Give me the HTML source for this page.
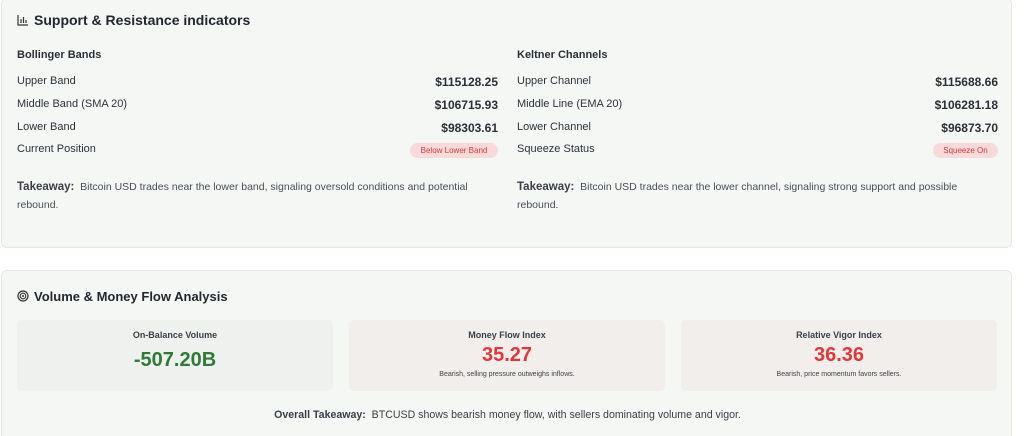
<!DOCTYPE html>
<html><head><meta charset="utf-8"><style>
*{box-sizing:border-box;margin:0;padding:0}
html,body{width:1024px;height:436px;overflow:hidden}
body{background:#fff;font-family:"Liberation Sans",sans-serif;color:#2b2f36;position:relative}
.card{position:absolute;left:1px;width:1011px;background:#f5f7f5;border:1px solid #e3e6e3;border-radius:6px}
.t{position:absolute;white-space:nowrap}
.h{font-size:14px;font-weight:bold;color:#23272e}
.sub{font-size:11px;font-weight:bold}
.lbl{font-size:11px;color:#2e333a}
.val{font-size:12px;font-weight:bold;text-align:right}
.pill{position:absolute;height:15px;border-radius:8px;background:#f8dada;color:#d6383a;font-size:8px;line-height:15px;text-align:center}
.tk{font-size:10.5px;color:#4a4f57;line-height:18px;width:470px;white-space:normal}
.tk b{font-size:11.5px;color:#3a3e45}
.box{position:absolute;top:49px;width:316px;height:71px;border-radius:5px;background:#f1eeec;text-align:center}
.box .a{position:absolute;top:10px;width:100%;font-size:9px;font-weight:bold;color:#3c4048}
.box .b{position:absolute;top:24px;width:100%;font-size:20px;font-weight:bold;color:#e0373a}
.box .c{position:absolute;top:51px;width:100%;font-size:7px;color:#3c4048}
</style></head><body>
<div class="card" style="top:-2px;height:250px">
<svg class="t" style="left:15px;top:15px" width="12" height="12" viewBox="0 0 12 12"><path d="M1 1v10h10M4 9V5M6.5 9V3M9 9V6" stroke="#333" stroke-width="1.2" fill="none"/></svg>
<div class="t h" style="left:32px;top:13px">Support &amp; Resistance indicators</div>
<div class="t sub" style="left:15px;top:50px">Bollinger Bands</div>
<div class="t lbl" style="left:15px;top:76px">Upper Band</div><div class="t val" style="right:513px;top:76px">$115128.25</div>
<div class="t lbl" style="left:15px;top:99px">Middle Band (SMA 20)</div><div class="t val" style="right:513px;top:99px">$106715.93</div>
<div class="t lbl" style="left:15px;top:122px">Lower Band</div><div class="t val" style="right:513px;top:122px">$98303.61</div>
<div class="t lbl" style="left:15px;top:144px">Current Position</div><div class="pill" style="left:408px;top:144px;width:88px">Below Lower Band</div>
<div class="t tk" style="left:15px;top:179px"><b>Takeaway:</b>&nbsp; Bitcoin USD trades near the lower band, signaling oversold conditions and potential rebound.</div>
<div class="t sub" style="left:515px;top:50px">Keltner Channels</div>
<div class="t lbl" style="left:515px;top:76px">Upper Channel</div><div class="t val" style="right:13px;top:76px">$115688.66</div>
<div class="t lbl" style="left:515px;top:99px">Middle Line (EMA 20)</div><div class="t val" style="right:13px;top:99px">$106281.18</div>
<div class="t lbl" style="left:515px;top:122px">Lower Channel</div><div class="t val" style="right:13px;top:122px">$96873.70</div>
<div class="t lbl" style="left:515px;top:144px">Squeeze Status</div><div class="pill" style="left:931px;top:144px;width:65px">Squeeze On</div>
<div class="t tk" style="left:515px;top:179px"><b>Takeaway:</b>&nbsp; Bitcoin USD trades near the lower channel, signaling strong support and possible rebound.</div>
</div>
<div class="card" style="top:270px;height:180px">
<svg class="t" style="left:15px;top:19px" width="12" height="12" viewBox="0 0 12 12"><circle cx="6" cy="6" r="5" stroke="#333" stroke-width="1.2" fill="none"/><circle cx="6" cy="6" r="2.8" stroke="#333" stroke-width="1.1" fill="none"/><circle cx="6" cy="6" r="1" fill="#333"/></svg>
<div class="t h" style="left:32px;top:18px;font-size:13px">Volume &amp; Money Flow Analysis</div>
<div class="box" style="left:15px;background:#eef1ed"><div class="a">On-Balance Volume</div><div class="b" style="top:29px;color:#2f7a38">-507.20B</div></div>
<div class="box" style="left:347px"><div class="a">Money Flow Index</div><div class="b">35.27</div><div class="c">Bearish, selling pressure outweighs inflows.</div></div>
<div class="box" style="left:679px"><div class="a">Relative Vigor Index</div><div class="b">36.36</div><div class="c">Bearish, price momentum favors sellers.</div></div>
<div class="t" style="left:0;width:1011px;text-align:center;top:138px;font-size:10.6px;color:#3a3e45"><b>Overall Takeaway:</b>&nbsp; BTCUSD shows bearish money flow, with sellers dominating volume and vigor.</div>
</div>
</body></html>
